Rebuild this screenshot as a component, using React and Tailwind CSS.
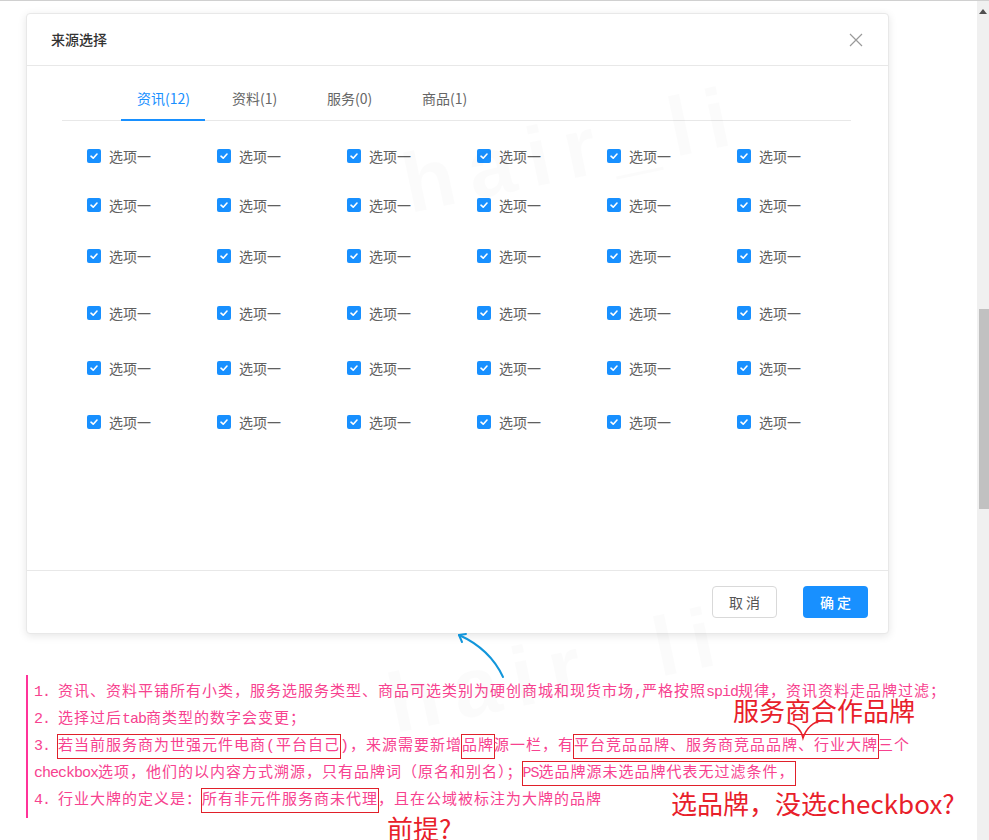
import React from 'react';

const tabs = [
  { label: '资讯(12)', active: true },
  { label: '资料(1)' },
  { label: '服务(0)' },
  { label: '商品(1)' },
];

// top margin of each checkbox row, first one measured from the tab bar
const rowGaps = ['mt-[24px]', 'mt-[27px]', 'mt-[29px]', 'mt-[35px]', 'mt-[33px]', 'mt-[32px]'];

function CheckBox() {
  return (
    <span className="flex h-[14px] w-[14px] items-center justify-center rounded-[2px] bg-[#1890ff]">
      <svg width="10" height="10" viewBox="0 0 10 10">
        <path d="M2 5.2 L4.2 7.2 L8 3" fill="none" stroke="#fff" strokeWidth="1.6" strokeLinecap="round" strokeLinejoin="round" />
      </svg>
    </span>
  );
}

const Box = ({ children }) => (
  <span className="py-[3px] shadow-[0_0_0_1px_#e0202a]">{children}</span>
);
const M = ({ children }) => <span className="tracking-[-1px]">{children}</span>;

export default function App() {
  return (
    <div className="relative flex h-[840px] w-[989px] overflow-hidden border-t border-[#d0d0d0] bg-white font-['Noto_Sans_CJK_SC',sans-serif]">
      <div className="flex-1 pl-[26px] pt-[12px]">
        {/* Modal */}
        <div className="flex h-[621px] w-[863px] flex-col rounded-[4px] border border-[#e8e8e8] bg-white shadow-[0_2px_8px_rgba(0,0,0,0.1)]">
          <div className="flex h-[52px] items-center justify-between border-b border-[#e8e8e8] pl-[24px] pr-[25px]">
            <span className="text-[14px] font-medium text-[#333]">来源选择</span>
            <svg width="14" height="14" viewBox="0 0 14 14">
              <path d="M1 1 L13 13 M13 1 L1 13" stroke="#9a9a9a" strokeWidth="1.2" />
            </svg>
          </div>

          <div className="flex-1">
            <div className="ml-[35px] mr-[37px] mt-[10px] flex border-b border-[#e8e8e8] pl-[59px]">
              {tabs.map((t) =>
                t.active ? (
                  <div key={t.label} className="relative mr-[11px] flex h-[44px] w-[84px] shrink-0 items-center whitespace-nowrap pl-4 text-[14px] text-[#1890ff]">
                    {t.label}
                    <span className="absolute bottom-[-1px] left-0 h-[2px] w-full bg-[#1890ff]" />
                  </div>
                ) : (
                  <div key={t.label} className="flex h-[44px] w-[95px] shrink-0 items-center whitespace-nowrap pl-4 text-[14px] text-[#666]">
                    {t.label}
                  </div>
                )
              )}
            </div>

            <div className="ml-[60px]">
              {rowGaps.map((g, r) => (
                <div key={r} className={`grid h-[22px] grid-cols-[repeat(6,130px)] ${g}`}>
                  {Array.from({ length: 6 }).map((_, c) => (
                    <div key={c} className="flex items-center gap-[8px]">
                      <CheckBox />
                      <span className="text-[14px] leading-[22px] text-[#606060]">选项一</span>
                    </div>
                  ))}
                </div>
              ))}
            </div>
          </div>

          <div className="flex h-[63px] items-start justify-end gap-[26px] border-t border-[#e8e8e8] pr-[20px] pt-[15px]">
            <button className="h-[32px] w-[65px] rounded-[4px] border border-[#d9d9d9] bg-white text-[14px] text-[#555]">取 消</button>
            <button className="h-[32px] w-[65px] rounded-[4px] bg-[#1890ff] text-[14px] font-medium text-white">确 定</button>
          </div>
        </div>

        {/* Notes */}
        <div className="mt-[41px] border-l-2 border-[#ff3399] py-[4px] pl-[6px] font-['Liberation_Mono','Noto_Sans_CJK_SC',monospace] text-[15px] tracking-[1px] text-[#f7428f]">
          <div className="h-[27px] whitespace-nowrap leading-[27px]">
            <M>1. </M>资讯、资料平铺所有小类，服务选服务类型、商品可选类别为硬创商城和现货市场<M>,</M>严格按照<M>spid</M>规律，资讯资料走品牌过滤；
          </div>
          <div className="h-[27px] whitespace-nowrap leading-[27px]">
            <M>2. </M>选择过后<M>tab</M>商类型的数字会变更；
          </div>
          <div className="h-[27px] whitespace-nowrap leading-[27px]">
            <M>3. </M><Box>若当前服务商为世强元件电商(平台自己</Box>)，来源需要新增<Box>品牌</Box>源一栏，有<Box>平台竞品品牌、服务商竞品品牌、行业大牌</Box>三个
          </div>
          <div className="h-[27px] whitespace-nowrap leading-[27px]">
            <M>checkbox</M>选项，他们的以内容方式溯源，只有品牌词（原名和别名）；<Box><M>PS</M>选品牌源未选品牌代表无过滤条件，</Box>
          </div>
          <div className="h-[27px] whitespace-nowrap leading-[27px]">
            <M>4. </M>行业大牌的定义是：<Box>所有非元件服务商未代理</Box>，且在公域被标注为大牌的品牌
          </div>
        </div>
      </div>

      {/* Scrollbar */}
      <div className="flex w-[12px] flex-col items-center bg-[#f0f0f0]">
        <svg className="mt-[8px]" width="8" height="5" viewBox="0 0 8 5">
          <path d="M0 5 L4 0 L8 5 Z" fill="#505050" />
        </svg>
        <div className="ml-[2px] mt-[295px] h-[200px] w-[10px] bg-[#c1c1c1]" />
      </div>

      {/* Watermarks */}
      <span className="pointer-events-none absolute left-[400px] top-[85px] -rotate-12 font-['Liberation_Sans',sans-serif] text-[84px] font-bold tracking-[14px] text-black/[0.015]">hair_li</span>
      <span className="pointer-events-none absolute left-[385px] top-[605px] -rotate-12 font-['Liberation_Sans',sans-serif] text-[84px] font-bold tracking-[14px] text-black/[0.015]">hair_li</span>

      {/* Blue arrow */}
      <svg className="pointer-events-none absolute left-[450px] top-[625px]" width="60" height="56" viewBox="450 625 60 56">
        <path d="M503 676 Q490 648 459 634" fill="none" stroke="#1296db" strokeWidth="2" strokeLinecap="round" />
        <path d="M459 634 L462 641 M459 634 L466 633" fill="none" stroke="#1296db" strokeWidth="2" strokeLinecap="round" />
      </svg>

      {/* Red annotations */}
      <span className="absolute left-[733px] top-[694px] whitespace-nowrap text-[26px] leading-[30px] text-[#e8202a]">服务商合作品牌</span>
      <svg className="pointer-events-none absolute left-[785px] top-[715px]" width="42" height="26" viewBox="785 715 42 26">
        <path d="M788 722 Q800 724 803 737 Q808 722 823 719" fill="none" stroke="#e8202a" strokeWidth="1.6" strokeLinecap="round" />
      </svg>
      <span className="absolute left-[671px] top-[787px] whitespace-nowrap text-[26px] leading-[30px] text-[#e8202a]">选品牌，没选checkbox?</span>
      <span className="absolute left-[387px] top-[812px] whitespace-nowrap text-[26px] leading-[30px] text-[#e8202a]">前提?</span>
    </div>
  );
}
